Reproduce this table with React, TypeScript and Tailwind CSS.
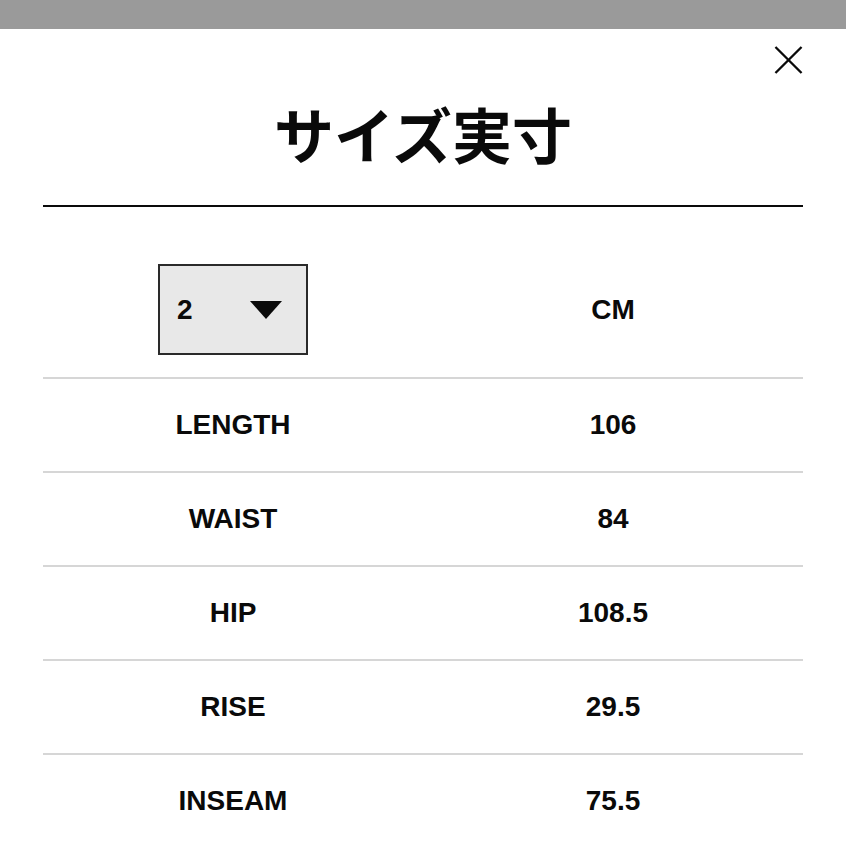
const rows = [
  { label: 'LENGTH', value: '106' },
  { label: 'WAIST', value: '84' },
  { label: 'HIP', value: '108.5' },
  { label: 'RISE', value: '29.5' },
  { label: 'INSEAM', value: '75.5' },
];

export default function App() {
  return (
    <div
      className="min-h-[846px] w-[846px] overflow-hidden bg-white text-[#0a0a0a]"
      style={{ fontFamily: '"Liberation Sans", Arial, sans-serif' }}
    >
      {/* Dimmed page behind the sheet */}
      <div className="h-[29px] bg-[#9a9a9a]" />

      <div className="px-[43px]">
        {/* Title */}
        <div className="relative h-[178px] border-b-2 border-[#0a0a0a] pt-[74px] text-center">
          <h1
            className="text-[60px] font-bold leading-none"
            style={{ fontFamily: '"Noto Sans CJK JP", "Noto Sans", sans-serif' }}
          >
            サイズ実寸
          </h1>
          <button className="absolute right-0 top-[16px] flex h-[29px] w-[29px] items-center justify-center">
            <svg width="30" height="30" viewBox="0 0 30 30" fill="none">
              <path d="M1.5 1.5L28.5 28.5M28.5 1.5L1.5 28.5" stroke="#0a0a0a" strokeWidth="2.4" />
            </svg>
          </button>
        </div>

        {/* Header row */}
        <div className="grid h-[172px] grid-cols-2 border-b-2 border-[#d6d6d6]">
          <div className="flex justify-center pt-[57px]">
            <div className="flex h-[91px] w-[150px] items-center justify-between border-2 border-[#2a2a2a] bg-[#e8e8e8] pl-[17px] pr-[24px]">
              <span className="text-[28px] font-bold">2</span>
              <svg width="32" height="18" viewBox="0 0 32 18">
                <path d="M0 0H32L16 18Z" fill="#0a0a0a" />
              </svg>
            </div>
          </div>
          <div className="flex justify-center pt-[80px]">
            <span className="text-[28px] font-bold leading-[46px]">CM</span>
          </div>
        </div>

        {/* Measurements */}
        {rows.map((row) => (
          <div
            key={row.label}
            className="grid h-[94px] grid-cols-2 items-center border-b-2 border-[#d6d6d6] text-center text-[28px] font-bold"
          >
            <span>{row.label}</span>
            <span>{row.value}</span>
          </div>
        ))}
      </div>
    </div>
  );
}
